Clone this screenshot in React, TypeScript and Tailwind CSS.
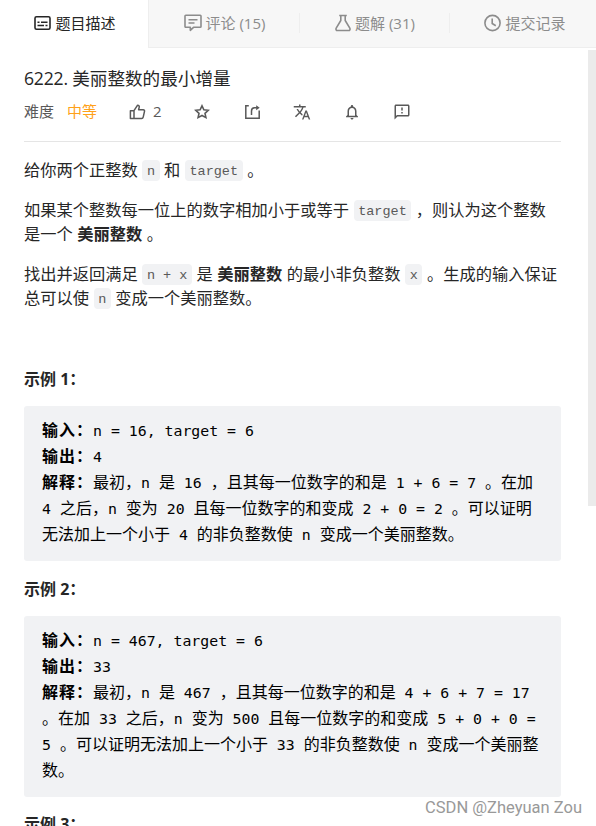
import type { ReactNode } from 'react'
import { MdNotificationsNone, MdOutlineFeedback, MdTranslate } from 'react-icons/md'

const TABS = [
  { label: '评论 (15)', icon: <CommentIcon /> },
  { label: '题解 (31)', icon: <FlaskIcon /> },
  { label: '提交记录', icon: <ClockIcon /> },
]

const EXAMPLES = [
  {
    input: 'n = 16, target = 6',
    output: '4',
    explanation: [
      '最初，n 是 16 ，且其每一位数字的和是 1 + 6 = 7 。在加',
      '4 之后，n 变为 20 且每一位数字的和变成 2 + 0 = 2 。可以证明',
      '无法加上一个小于 4 的非负整数使 n 变成一个美丽整数。',
    ],
  },
  {
    input: 'n = 467, target = 6',
    output: '33',
    explanation: [
      '最初，n 是 467 ，且其每一位数字的和是 4 + 6 + 7 = 17',
      '。在加 33 之后，n 变为 500 且每一位数字的和变成 5 + 0 + 0 =',
      '5 。可以证明无法加上一个小于 33 的非负整数使 n 变成一个美丽整',
      '数。',
    ],
  },
]

export default function App() {
  return (
    <div className="relative h-[826px] w-[596px] overflow-hidden bg-white font-['Open_Sans','Noto_Sans_CJK_SC',sans-serif] text-[#262626] [text-spacing-trim:space-all]">
      <header className="flex h-12 text-[15px]">
        <div className="flex w-[148px] shrink-0 items-center justify-center gap-1 pb-0.5 pl-0.5">
          <SubtitlesIcon />
          <span>题目描述</span>
        </div>
        <nav className="flex flex-1 border-b border-l border-[#eeeeee] bg-[#f7f7f7] text-[#8c8c8c]">
          {TABS.map((tab, i) => (
            <div key={tab.label} className="flex w-[150px] shrink-0 items-center pb-px">
              {i > 0 && <span className="h-5 w-px bg-[#eeeeee]" />}
              <span className="flex flex-1 items-center justify-center gap-1 pl-px">
                {tab.icon}
                {tab.label}
              </span>
            </div>
          ))}
        </nav>
      </header>

      <div className="absolute top-[50px] right-0 h-[456px] w-2 bg-[#ebebeb]" />

      <main className="ml-6 w-[537px]">
        <h1 className="mt-4 h-7 text-[17.6px] leading-7 whitespace-nowrap">
          <span className="font-medium tracking-[-0.2px]">6222. </span>美丽整数的最小增量
        </h1>
        <div className="mt-2 flex h-6 items-center text-[15px] text-[#595959]">
          <span className="w-[43px] pb-px">难度</span>
          <span className="w-[62px] pb-px text-[#ffa119]">中等</span>
          <ThumbIcon />
          <span className="ml-[7px] w-6 pb-px">2</span>
          <div className="flex items-center">
            <Action><StarIcon /></Action>
            <Action><ShareIcon /></Action>
            <Action><MdTranslate size={18} /></Action>
            <Action><MdNotificationsNone size={18} /></Action>
            <Action><MdOutlineFeedback size={18} /></Action>
          </div>
        </div>
        <hr className="mt-[17px] border-[#e5e5e5]" />

        <div className="pt-4 text-[16.25px] leading-[24.4px] whitespace-nowrap [word-spacing:0.3px]">
          <p>
            给你两个正整数 <Code>n</Code> 和 <Code>target</Code> 。
          </p>
          <p className="mt-[15.5px]">
            如果某个整数每一位上的数字相加小于或等于 <Code>target</Code> ，则认为这个整数
            <br />
            是一个 <b>美丽整数</b> 。
          </p>
          <p className="mt-[15px]">
            找出并返回满足 <Code>n + x</Code> 是 <b>美丽整数</b> 的最小非负整数 <Code>x</Code> 。生成的输入保证
            <br />
            总可以使 <Code>n</Code> 变成一个美丽整数。
          </p>
        </div>

        <div className="mt-[56px]">
          {EXAMPLES.map((example, i) => (
            <section key={example.input}>
              <Heading n={i + 1} />
              <div className="mt-[15.4px] mb-[15.6px] rounded-[3px] bg-[#f1f2f4] px-[18px] pt-[11.2px] pb-[13.8px] text-base leading-[26px] whitespace-pre text-black">
                <Line label="输入" text={example.input} />
                <Line label="输出" text={example.output} />
                {example.explanation.map((text, row) => (
                  <Line key={text} label={row === 0 ? '解释' : undefined} text={text} />
                ))}
              </div>
            </section>
          ))}
          <Heading n={3} />
        </div>
      </main>

      <div className="absolute right-[14px] bottom-2 text-[16.5px] leading-5 text-[#999999] font-['Roboto',sans-serif]">
        CSDN @Zheyuan Zou
      </div>
    </div>
  )
}

function Heading({ n }: { n: number }) {
  return <h2 className="h-6 text-[16px] leading-6 font-bold">示例 {n}：</h2>
}

function Code({ children }: { children: ReactNode }) {
  return (
    <code className="relative -top-px inline-block h-[21px] rounded-[4px] bg-[#f1f2f4] px-[4.6px] align-middle text-[13.5px] leading-[23px] text-[#595959] font-['Liberation_Mono',monospace] [word-spacing:0]">
      {children}
    </code>
  )
}

// Latin runs are set narrower than the ideographs around them, so the two are split.
function Line({ label, text }: { label?: string; text: string }) {
  return (
    <div className="h-[26px]">
      {label && <b className="tracking-[1px]">{label}：</b>}
      {text.split(/([\x20-\x7e]+)/).map((run, i) =>
        i % 2 === 1 ? (
          <span key={i} className="text-[14.85px] leading-none font-['DejaVu_Sans_Mono',monospace]">
            {run}
          </span>
        ) : (
          run
        ),
      )}
    </div>
  )
}

function Action({ children }: { children: ReactNode }) {
  return <span className="flex w-[50px] justify-center">{children}</span>
}

function SubtitlesIcon() {
  return (
    <svg width="17" height="16" viewBox="0 0 17 16" fill="none" stroke="currentColor" strokeWidth="1.6">
      <rect x="1" y="1.8" width="15" height="12.4" rx="1.5" />
      <path d="M3.5 7.2h2M7 7.2h6.5M3.5 10.4h6.5M11.5 10.4h2" strokeWidth="1.5" />
    </svg>
  )
}

function CommentIcon() {
  return (
    <svg width="18" height="18" viewBox="0 0 18 18" fill="none" stroke="currentColor" strokeWidth="1.6" strokeLinejoin="round">
      <path d="M1.8 1.3h14.4a.8.8 0 0 1 .8.8v10.4a.8.8 0 0 1-.8.8H9.5L6.3 16.3v-3H1.8a.8.8 0 0 1-.8-.8V2.1a.8.8 0 0 1 .8-.8z" />
      <path d="M4.5 5.8h9M4.5 9h6" />
    </svg>
  )
}

function FlaskIcon() {
  return (
    <svg width="16" height="18" viewBox="0 0 16 18" fill="none" stroke="currentColor" strokeWidth="1.6" strokeLinejoin="round">
      <path d="M4.2 1.5h7.6M5.8 1.5v5L1.2 14.2c-.6 1.1 0 2.3 1.2 2.3h11.2c1.2 0 1.8-1.2 1.2-2.3L10.2 6.5v-5" />
    </svg>
  )
}

function ClockIcon() {
  return (
    <svg width="17" height="18" viewBox="0 0 17 18" fill="none" stroke="currentColor" strokeWidth="1.6">
      <circle cx="8.5" cy="9" r="7.6" />
      <path d="M8.2 4.5v5l3.6 2.2" />
    </svg>
  )
}

function ThumbIcon() {
  return (
    <svg width="17" height="16" viewBox="0 0 17 16" fill="none" stroke="currentColor" strokeWidth="1.5" strokeLinejoin="round">
      <path d="M5 6.7 8.6 1.2c1.4 0 1.9 1 1.6 2.2l-.6 2.3h4.6c1 0 1.5.8 1.3 1.7l-1.3 5.7c-.2.8-.7 1.3-1.5 1.3H5zM5 6.7H1.4v7.7H5" />
    </svg>
  )
}

function StarIcon() {
  return (
    <svg width="16" height="16" viewBox="0 0 16 16" fill="none" stroke="currentColor" strokeWidth="1.6">
      <path d="m8 1.8 1.9 4 4.4.5-3.3 3 .9 4.3L8 11.5l-3.9 2.1.9-4.3-3.3-3 4.4-.5z" />
    </svg>
  )
}

function ShareIcon() {
  return (
    <svg width="17" height="16" viewBox="0 0 17 16" fill="none" stroke="currentColor" strokeWidth="1.5">
      <path d="M4.8 1.8H1.8v12.4h13.4V6.5M7.5 11V7c0-2 1-3.3 3-3.3H14" />
      <path d="m12.2 1.2 3.5 2.5-3.5 2.5z" fill="currentColor" stroke="none" />
    </svg>
  )
}
